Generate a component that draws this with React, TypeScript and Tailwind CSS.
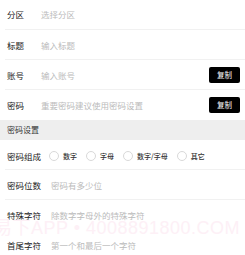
import type { ReactNode } from 'react'

const FONT = { fontFamily: '"Noto Sans CJK SC", "Noto Sans", sans-serif' }

function CopyButton() {
  return (
    <button className="ml-auto mr-[5px] h-4 w-[31px] rounded-[2px] bg-black text-[7.5px] leading-none text-white">
      复制
    </button>
  )
}

function Row({
  label,
  children,
  divider = true,
  className = '',
}: {
  label: string
  children: ReactNode
  divider?: boolean
  className?: string
}) {
  return (
    <div className={`relative flex h-[30px] items-center pl-[7px] ${className}`}>
      <span className="min-w-[34px] shrink-0 pr-[10px] text-[8.5px] text-[#1a1a1a]">{label}</span>
      {children}
      {divider && <div className="absolute bottom-0 left-[5px] right-0 h-px bg-[#f1f1f1]" />}
    </div>
  )
}

function Placeholder({ text }: { text: string }) {
  return <span className="text-[8.5px] text-[#bbbbbb]">{text}</span>
}

const OPTIONS = ['数字', '字母', '数字/字母', '其它']

export default function App() {
  return (
    <div className="relative h-[255px] w-[245px] overflow-hidden bg-white" style={FONT}>
      <Row label="分区" className="h-[26px] pb-[2px]">
        <Placeholder text="选择分区" />
      </Row>
      <Row label="标题">
        <Placeholder text="输入标题" />
      </Row>
      <Row label="账号">
        <Placeholder text="输入账号" />
        <CopyButton />
      </Row>
      <Row label="密码" divider={false}>
        <Placeholder text="重要密码建议使用密码设置" />
        <CopyButton />
      </Row>

      <div className="flex h-[20px] items-center bg-[#eeeeee] pl-[7px] text-[8px] text-[#333]">密码设置</div>

      <Row label="密码组成" className="pt-[2px]">
        <div className="-ml-[2px] flex items-center gap-[9px]">
          {OPTIONS.map((o) => (
            <label key={o} className="flex items-center gap-[4px]">
              <span className="h-[10px] w-[10px] rounded-full border border-[#d9d9d9]" />
              <span className="text-[7px] font-medium text-[#333]">{o}</span>
            </label>
          ))}
        </div>
      </Row>
      <Row label="密码位数">
        <Placeholder text="密码有多少位" />
      </Row>
      <Row label="特殊字符" divider={false}>
        <Placeholder text="除数字字母外的特殊字符" />
      </Row>
      <Row label="首尾字符" divider={false}>
        <Placeholder text="第一个和最后一个字符" />
      </Row>

      {/* watermark */}
      <div
        className="pointer-events-none absolute left-[-6px] top-[219px] whitespace-nowrap text-[18px] leading-none tracking-[0.5px] text-[#fdf0f6]"
        style={{ fontFamily: '"Liberation Sans", "Noto Sans CJK SC", sans-serif' }}
      >
        易下APP • 4008891800.COM
      </div>
    </div>
  )
}
